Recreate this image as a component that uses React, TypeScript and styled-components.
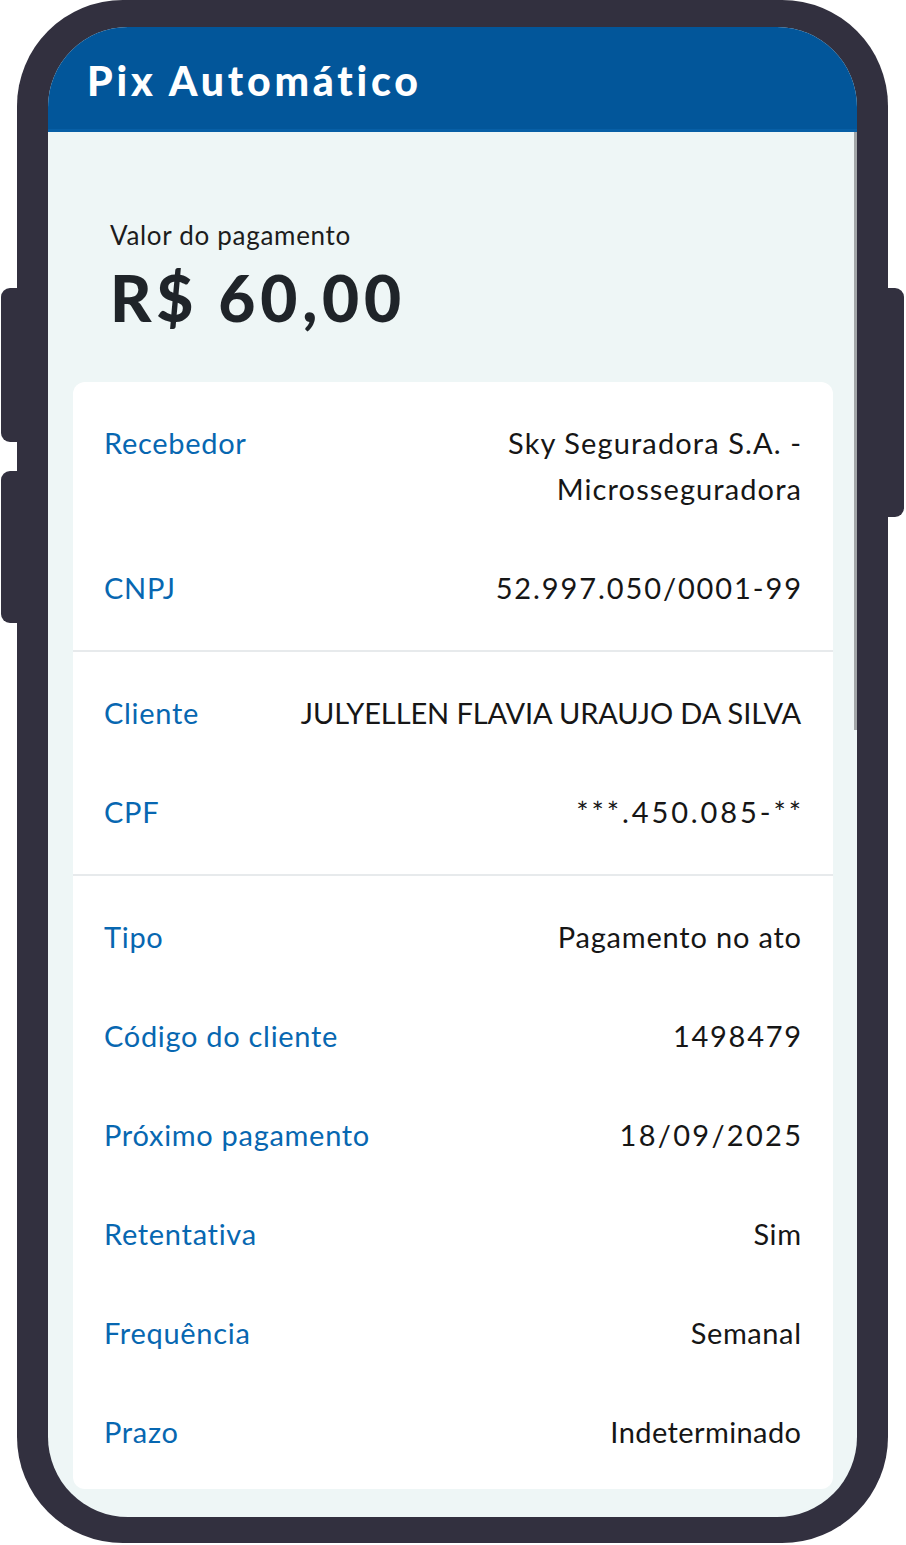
import React from "react";
import styled, { createGlobalStyle } from "styled-components";

const GlobalStyle = createGlobalStyle`
  html, body { margin: 0; padding: 0; background: #ffffff; }
  body { font-family: Lato, "Open Sans", sans-serif; -webkit-font-smoothing: antialiased; }
  * { box-sizing: border-box; }
`;

const Device = styled.div`
  display: flex;
  width: 906px;
  height: 1545px;
`;

const SideRail = styled.div<{ $side: "left" | "right" }>`
  width: 17px;
  flex: none;
  display: flex;
  flex-direction: column;
  align-items: ${(p) => (p.$side === "left" ? "flex-end" : "flex-start")};
  padding-top: 288px;
  gap: 29px;
`;

const SideButton = styled.div<{ $side: "left" | "right"; $h: number }>`
  width: 16px;
  height: ${(p) => p.$h}px;
  background: #32303f;
  border-radius: ${(p) => (p.$side === "left" ? "9px 0 0 9px" : "0 9px 9px 0")};
`;

const Frame = styled.div`
  width: 871px;
  height: 1543px;
  flex: none;
  background: #32303f;
  border-radius: 106px;
  padding: 27px 31px 26px 31px;
`;

const Screen = styled.div`
  position: relative;
  height: 100%;
  background: #eef6f6;
  border-radius: 80px;
  overflow: hidden;
  display: flex;
  flex-direction: column;
`;

const Header = styled.header`
  height: 105px;
  flex: none;
  background: #02569a;
  border-bottom: 3px solid #075fa6;
  display: flex;
  align-items: center;
  padding: 4px 39px 0;
`;

const Title = styled.h1`
  margin: 0;
  color: #ffffff;
  font-family: Lato, sans-serif;
  font-weight: 900;
  font-size: 41px;
  letter-spacing: 3.8px;
  line-height: 1;
`;

const ScrollThumb = styled.div`
  position: absolute;
  right: 0;
  top: 105px;
  width: 3px;
  height: 598px;
  background: #a2a6a8;
`;

const AmountBlock = styled.section`
  padding: 88px 0 0 62px;
  display: flex;
  flex-direction: column;
  gap: 13px;
`;

const AmountCaption = styled.div`
  font-size: 26px;
  line-height: 30px;
  color: #1c1c1c;
  letter-spacing: 0.7px;
`;

const AmountValue = styled.div`
  font-size: 64px;
  line-height: 70px;
  font-weight: 900;
  color: #1f2429;
  letter-spacing: 4.8px;
`;

const Card = styled.div`
  margin: 49px 24px 0 25px;
  background: #ffffff;
  border-radius: 12px;
`;

const Section = styled.div<{ $last?: boolean }>`
  display: flex;
  flex-direction: column;
  gap: 53px;
  padding: 38px 32px ${(p) => (p.$last ? "34px" : "39px")} 31px;
  & + & {
    border-top: 2px solid #e7eaec;
  }
`;

const Row = styled.div`
  display: flex;
  justify-content: space-between;
  align-items: flex-start;
  gap: 24px;
`;

const Label = styled.span`
  flex: none;
  font-size: 29px;
  line-height: 46px;
  color: #0767b1;
  letter-spacing: 0.7px;
`;

const Value = styled.span<{ $ls: number }>`
  font-size: 29px;
  line-height: 46px;
  color: #161616;
  text-align: right;
  letter-spacing: ${(p) => p.$ls}px;
  margin-right: -${(p) => p.$ls}px;
`;

type Item = { label: string; value: React.ReactNode; ls?: number };

const sections: Item[][] = [
  [
    {
      label: "Recebedor",
      value: (
        <>
          Sky Seguradora S.A. -<br />
          Microsseguradora
        </>
      ),
      ls: 1.1,
    },
    { label: "CNPJ", value: "52.997.050/0001-99", ls: 1.9 },
  ],
  [
    { label: "Cliente", value: "JULYELLEN FLAVIA URAUJO DA SILVA", ls: -0.1 },
    { label: "CPF", value: "***.450.085-**", ls: 2.9 },
  ],
  [
    { label: "Tipo", value: "Pagamento no ato", ls: 0.8 },
    { label: "Código do cliente", value: "1498479", ls: 1.7 },
    { label: "Próximo pagamento", value: "18/09/2025", ls: 2.3 },
    { label: "Retentativa", value: "Sim", ls: 0.6 },
    { label: "Frequência", value: "Semanal", ls: 0.6 },
    { label: "Prazo", value: "Indeterminado", ls: 0.4 },
  ],
];

export default function App() {
  return (
    <>
      <GlobalStyle />
      <Device>
        <SideRail $side="left">
          <SideButton $side="left" $h={154} />
          <SideButton $side="left" $h={152} />
        </SideRail>
        <Frame>
          <Screen>
            <Header>
              <Title>Pix Automático</Title>
            </Header>
            <ScrollThumb />
            <AmountBlock>
              <AmountCaption>Valor do pagamento</AmountCaption>
              <AmountValue>R$ 60,00</AmountValue>
            </AmountBlock>
            <Card>
              {sections.map((items, i) => (
                <Section key={i} $last={i === sections.length - 1}>
                  {items.map((it) => (
                    <Row key={it.label}>
                      <Label>{it.label}</Label>
                      <Value $ls={it.ls ?? 0.8}>{it.value}</Value>
                    </Row>
                  ))}
                </Section>
              ))}
            </Card>
          </Screen>
        </Frame>
        <SideRail $side="right">
          <SideButton $side="right" $h={229} />
        </SideRail>
      </Device>
    </>
  );
}
